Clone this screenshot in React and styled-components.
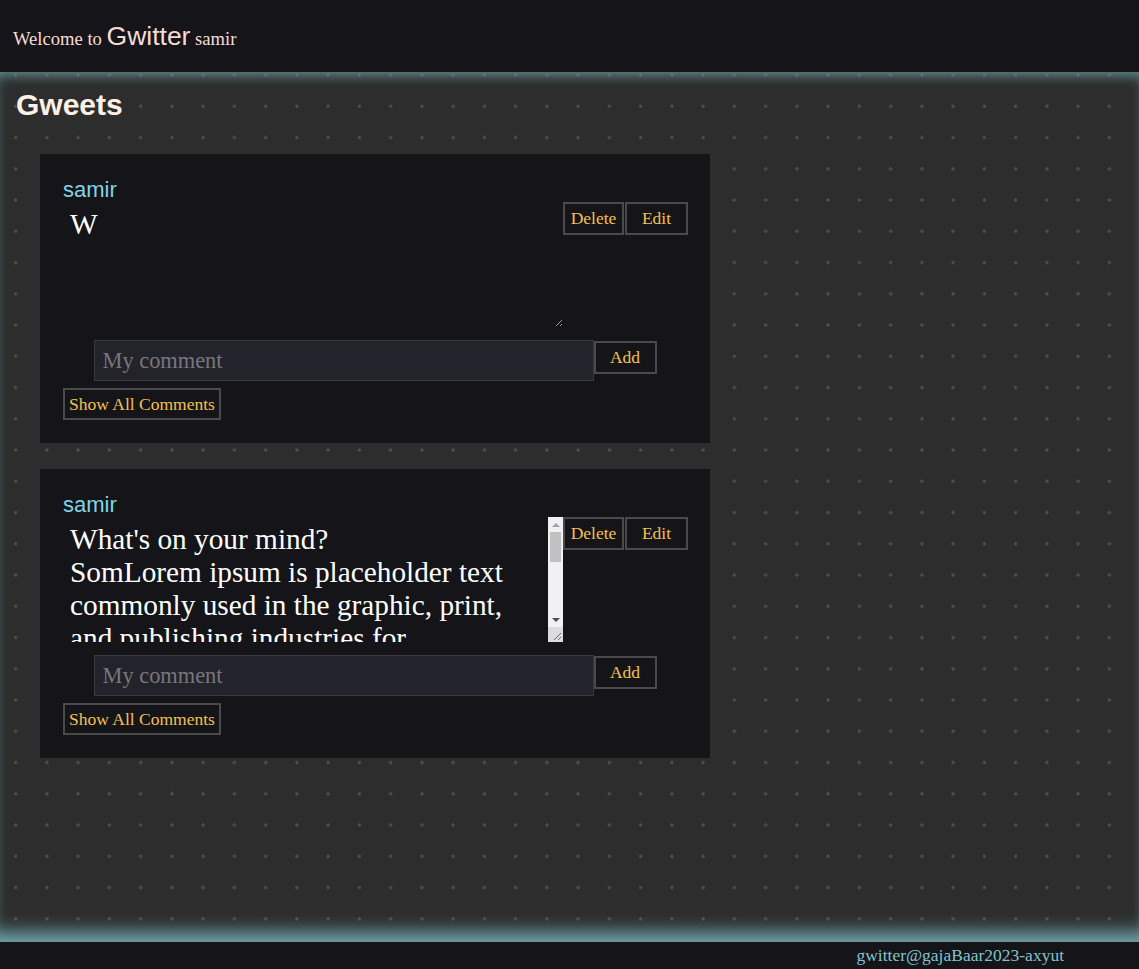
import styled, { createGlobalStyle } from "styled-components";

const GlobalStyle = createGlobalStyle`
  html, body {
    margin: 0;
    padding: 0;
    background: #141419;
  }
  * {
    box-sizing: border-box;
  }
`;

const Page = styled.div`
  display: flex;
  flex-direction: column;
  min-height: 100vh;
  font-family: "Liberation Serif", "Times New Roman", serif;
`;

const Header = styled.header`
  height: 72px;
  display: flex;
  align-items: center;
  padding-left: 13px;
  background: #141419;
  color: #f4dcd4;
`;

const Welcome = styled.div`
  font-size: 18.6px;
`;

const Logo = styled.span`
  font-family: "Liberation Sans", Arial, sans-serif;
  font-size: 26.5px;
`;

const Main = styled.main`
  flex: 1;
  min-height: 870px;
  padding: 16px 16px 40px;
  background-color: #2d2d2d;
  background-image: radial-gradient(circle, #4e504b 1.3px, transparent 2px);
  background-size: 31.25px 31.25px;
  background-position: 0 -12.6px;
  box-shadow: inset 0 12px 12px -8px rgba(105, 150, 155, 0.85),
    inset 0 -20px 18px -10px rgba(115, 175, 180, 0.95);
`;

const Title = styled.h2`
  margin: 0;
  font-family: "Liberation Sans", Arial, sans-serif;
  font-size: 30px;
  font-weight: bold;
  color: #fff0e6;
`;

const CardList = styled.div`
  display: flex;
  flex-direction: column;
  gap: 26px;
  margin-top: 32px;
  padding-left: 24px;
`;

const Card = styled.div`
  width: 670px;
  display: flex;
  flex-direction: column;
  padding: 23px;
  background: #151519;
`;

const Name = styled.div`
  font-family: "Liberation Sans", Arial, sans-serif;
  font-size: 22px;
  line-height: 25px;
  color: #80d4e6;
`;

const Row = styled.div`
  display: flex;
  align-items: flex-start;
`;

const BodyWrap = styled.div`
  position: relative;
  width: 500px;
  height: 125px;
`;

const Body = styled.textarea`
  display: block;
  width: 500px;
  height: 125px;
  padding: 6px ${(p) => (p.$scroll ? 22 : 7)}px 6px 7px;
  border: none;
  outline: none;
  overflow: hidden;
  background: transparent;
  color: #ffffff;
  font-family: "Liberation Serif", "Times New Roman", serif;
  font-size: 29.3px;
  line-height: 33px;
`;

/* the textarea's scrollbar, drawn over its right edge */
const ScrollBar = styled.div`
  position: absolute;
  top: 0;
  right: 0;
  width: 15px;
  height: 100%;
  display: flex;
  flex-direction: column;
  background: #f1f1f1;
`;

const Arrow = styled.div`
  height: 15px;
  display: flex;
  align-items: center;
  justify-content: center;
  &::before {
    content: "";
    border-left: 4px solid transparent;
    border-right: 4px solid transparent;
    ${(p) =>
      p.$down
        ? "border-top: 4px solid #505050;"
        : "border-bottom: 4px solid #a3a3a3;"}
  }
`;

const Thumb = styled.div`
  height: 30px;
  margin: 0 2px;
  background: #c1c1c1;
`;

const Track = styled.div`
  flex: 1;
`;

const Corner = styled.div`
  height: 15px;
  display: flex;
  align-items: flex-end;
  justify-content: flex-end;
  background: #dcdcdc;
`;

const Actions = styled.div`
  display: flex;
  gap: 1px;
`;

const Button = styled.button`
  width: ${(p) => (p.$w ? `${p.$w}px` : "auto")};
  height: ${(p) => p.$h || 33}px;
  padding: 0 4px;
  border: 2px solid #4a4a4a;
  background: #151519;
  color: #f3c04f;
  font-family: "Liberation Serif", "Times New Roman", serif;
  font-size: 17.5px;
  cursor: pointer;
`;

const CommentRow = styled.div`
  display: flex;
  justify-content: center;
  align-items: flex-start;
  margin-top: 13px;
`;

const CommentInput = styled.input`
  width: 500px;
  height: 41px;
  padding: 0 8px;
  border: 1px solid #3a3a3e;
  background: #23232c;
  color: #ddd;
  font-family: "Liberation Serif", "Times New Roman", serif;
  font-size: 22.4px;
  outline: none;
  &::placeholder {
    color: #77777a;
  }
`;

const AddButton = styled(Button)`
  margin-top: 1px;
`;

const ShowAll = styled(Button)`
  align-self: flex-start;
  margin-top: 7px;
`;

const Footer = styled.footer`
  height: 27px;
  display: flex;
  align-items: center;
  justify-content: flex-end;
  padding-right: 75px;
  background: #141419;
  color: #7fc6cc;
  font-size: 17.5px;
`;

const gweets = [
  { id: 1, author: "samir", text: "W" },
  {
    id: 2,
    author: "samir",
    text:
      "What's on your mind?\nSomLorem ipsum is placeholder text commonly used in the graphic, print, and publishing industries for previewing layouts and visual mockups.",
    long: true,
  },
];

function Grip() {
  return (
    <svg width="15" height="15" viewBox="0 0 15 15">
      <path d="M13 6 L6 13 M13 10 L10 13" stroke="#6e6e6e" strokeWidth="1" />
    </svg>
  );
}

function Gweet({ gweet }) {
  return (
    <Card>
      <Name>{gweet.author}</Name>
      <Row>
        <BodyWrap>
          <Body defaultValue={gweet.text} $scroll={gweet.long} />
          {gweet.long && (
            <ScrollBar>
              <Arrow />
              <Thumb />
              <Track />
              <Arrow $down />
              <Corner>
                <Grip />
              </Corner>
            </ScrollBar>
          )}
        </BodyWrap>
        <Actions>
          <Button $w={61}>Delete</Button>
          <Button $w={63}>Edit</Button>
        </Actions>
      </Row>
      <CommentRow>
        <CommentInput placeholder="My comment" />
        <AddButton $w={63}>Add</AddButton>
      </CommentRow>
      <ShowAll $h={32}>Show All Comments</ShowAll>
    </Card>
  );
}

export default function App() {
  return (
    <>
      <GlobalStyle />
      <Page>
        <Header>
          <Welcome>
            Welcome to <Logo>Gwitter</Logo> samir
          </Welcome>
        </Header>
        <Main>
          <Title>Gweets</Title>
          <CardList>
            {gweets.map((g) => (
              <Gweet key={g.id} gweet={g} />
            ))}
          </CardList>
        </Main>
        <Footer>gwitter@gajaBaar2023-axyut</Footer>
      </Page>
    </>
  );
}
